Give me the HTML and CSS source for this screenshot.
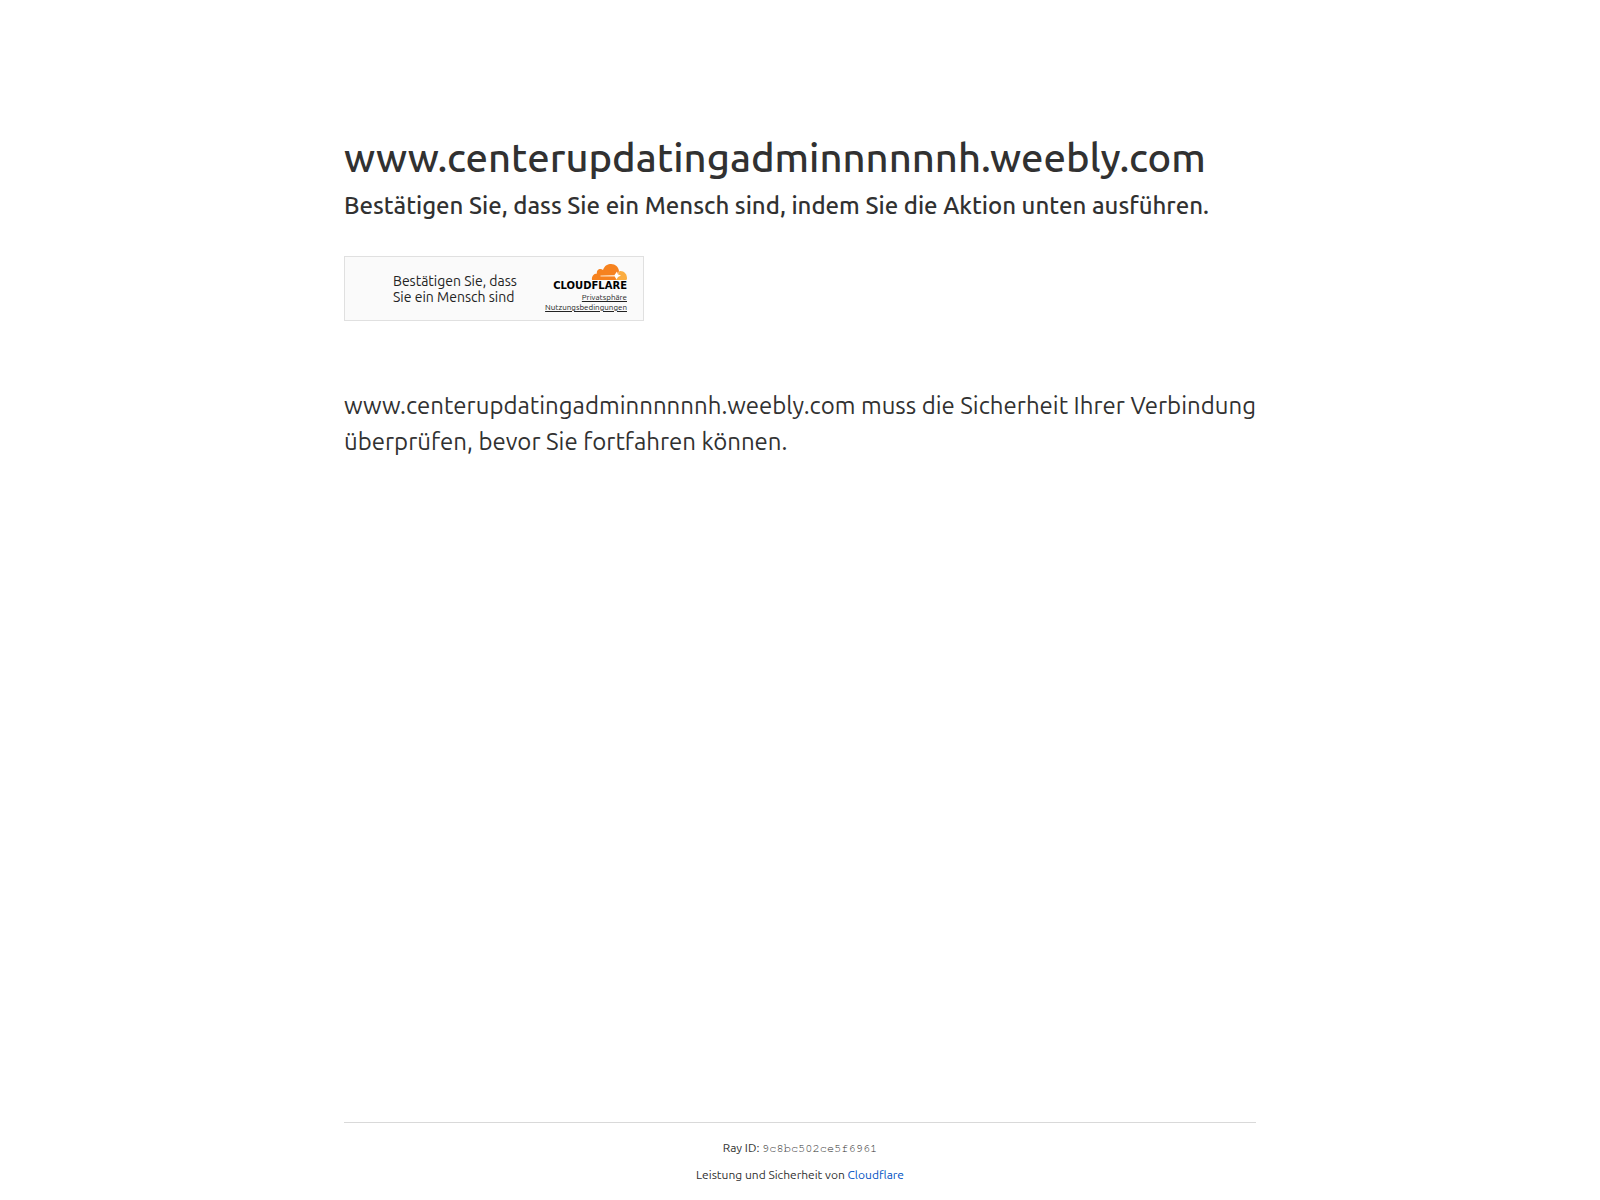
FILE: index.html
```html
<!DOCTYPE html>
<html lang="de">
<head>
  <meta charset="UTF-8" />
  <meta name="viewport" content="width=device-width, initial-scale=1.0"/>
  <title>Nur einen Moment…</title>
  <link rel="stylesheet" href="styles.css">
</head>
<body>

  <main class="main-content">
    <h1>www.centerupdatingadminnnnnnh.weebly.com</h1>
    <h2>Bestätigen Sie, dass Sie ein Mensch sind, indem Sie die Aktion unten ausführen.</h2>

    <div class="widget">
      <p class="widget-label">Bestätigen Sie, dass Sie ein Mensch sind</p>
      <div class="branding">
        <svg class="cloud" viewBox="0 0 72 34" aria-hidden="true">
          <path fill="#f6821f" d="M2 32C1 25 5 19 12 19C10 11 19 7 24 12C27 3 34 0 40 0C49 0 55 6 56 14L51 32Z"/>
          <path fill="#fbad41" d="M57 14C66 13 72 20 72 29L71 32H49Z"/>
          <path fill="#fde3c6" d="M19 23L48 22V25L19 25Z"/>
          <path fill="#fff" d="M47 22L52 15L54 21L60 23L54 26L51 31L48 26Z"/>
        </svg>
        <span class="wordmark">CLOUDFLARE</span>
        <a href="#">Privatsphäre</a>
        <a href="#">Nutzungsbedingungen</a>
      </div>
    </div>

    <p class="core-msg">www.centerupdatingadminnnnnnh.weebly.com muss die Sicherheit Ihrer Verbindung überprüfen, bevor Sie fortfahren können.</p>
  </main>

  <footer class="footer">
    <div class="footer-inner">
      <div>Ray ID: <code>9c8bc502ce5f6961</code></div>
      <div>Leistung und Sicherheit von <a href="#">Cloudflare</a></div>
    </div>
  </footer>

</body>
</html>
```
FILE: styles.css
```css
* {
  box-sizing: border-box;
  margin: 0;
  padding: 0;
}

body {
  display: flex;
  flex-direction: column;
  min-height: 100vh;
  background-color: #fff;
  color: #313131;
  font-family: "Ubuntu", "Noto Sans", sans-serif;
}

.main-content {
  flex: 1;
  width: 100%;
  max-width: 960px;
  margin: 0 auto;
  padding: 128px 24px 64px;
}

h1 {
  font-size: 40px;
  font-weight: 500;
  line-height: 60px;
}

h2 {
  font-size: 24px;
  font-weight: 500;
  line-height: 36px;
}

.widget {
  display: flex;
  align-items: center;
  justify-content: space-between;
  width: 300px;
  min-height: 65px;
  margin: 32px 0 67px;
  padding: 0 16px 0 48px;
  border: 1px solid #e0e0e0;
  background-color: #fafafa;
}

.widget-label {
  width: 136px;
  color: #232323;
  font-size: 14px;
  line-height: 16px;
}

.branding {
  display: flex;
  flex-direction: column;
  align-items: flex-end;
}

.cloud {
  width: 36px;
  height: 17px;
}

.wordmark {
  margin-bottom: 2px;
  color: #000;
  font-family: "DejaVu Sans", sans-serif;
  font-size: 10px;
  font-weight: 700;
  line-height: 10px;
}

.branding a {
  color: #232323;
  font-size: 8px;
  line-height: 10px;
}

.core-msg {
  font-size: 24px;
  font-weight: 400;
  line-height: 36px;
}

.footer {
  width: 100%;
  max-width: 960px;
  margin: 0 auto;
  padding: 0 24px;
  font-size: 12px;
  line-height: 18px;
}

.footer-inner {
  display: flex;
  flex-direction: column;
  gap: 9px;
  padding: 16px 0;
  border-top: 1px solid #d9d9d9;
  text-align: center;
}

.footer code {
  font-family: "Nimbus Mono PS", "FreeMono", "Liberation Mono", monospace;
  font-size: 12px;
  line-height: 16px;
}

.footer a {
  color: #0051c3;
  text-decoration: none;
}
```
